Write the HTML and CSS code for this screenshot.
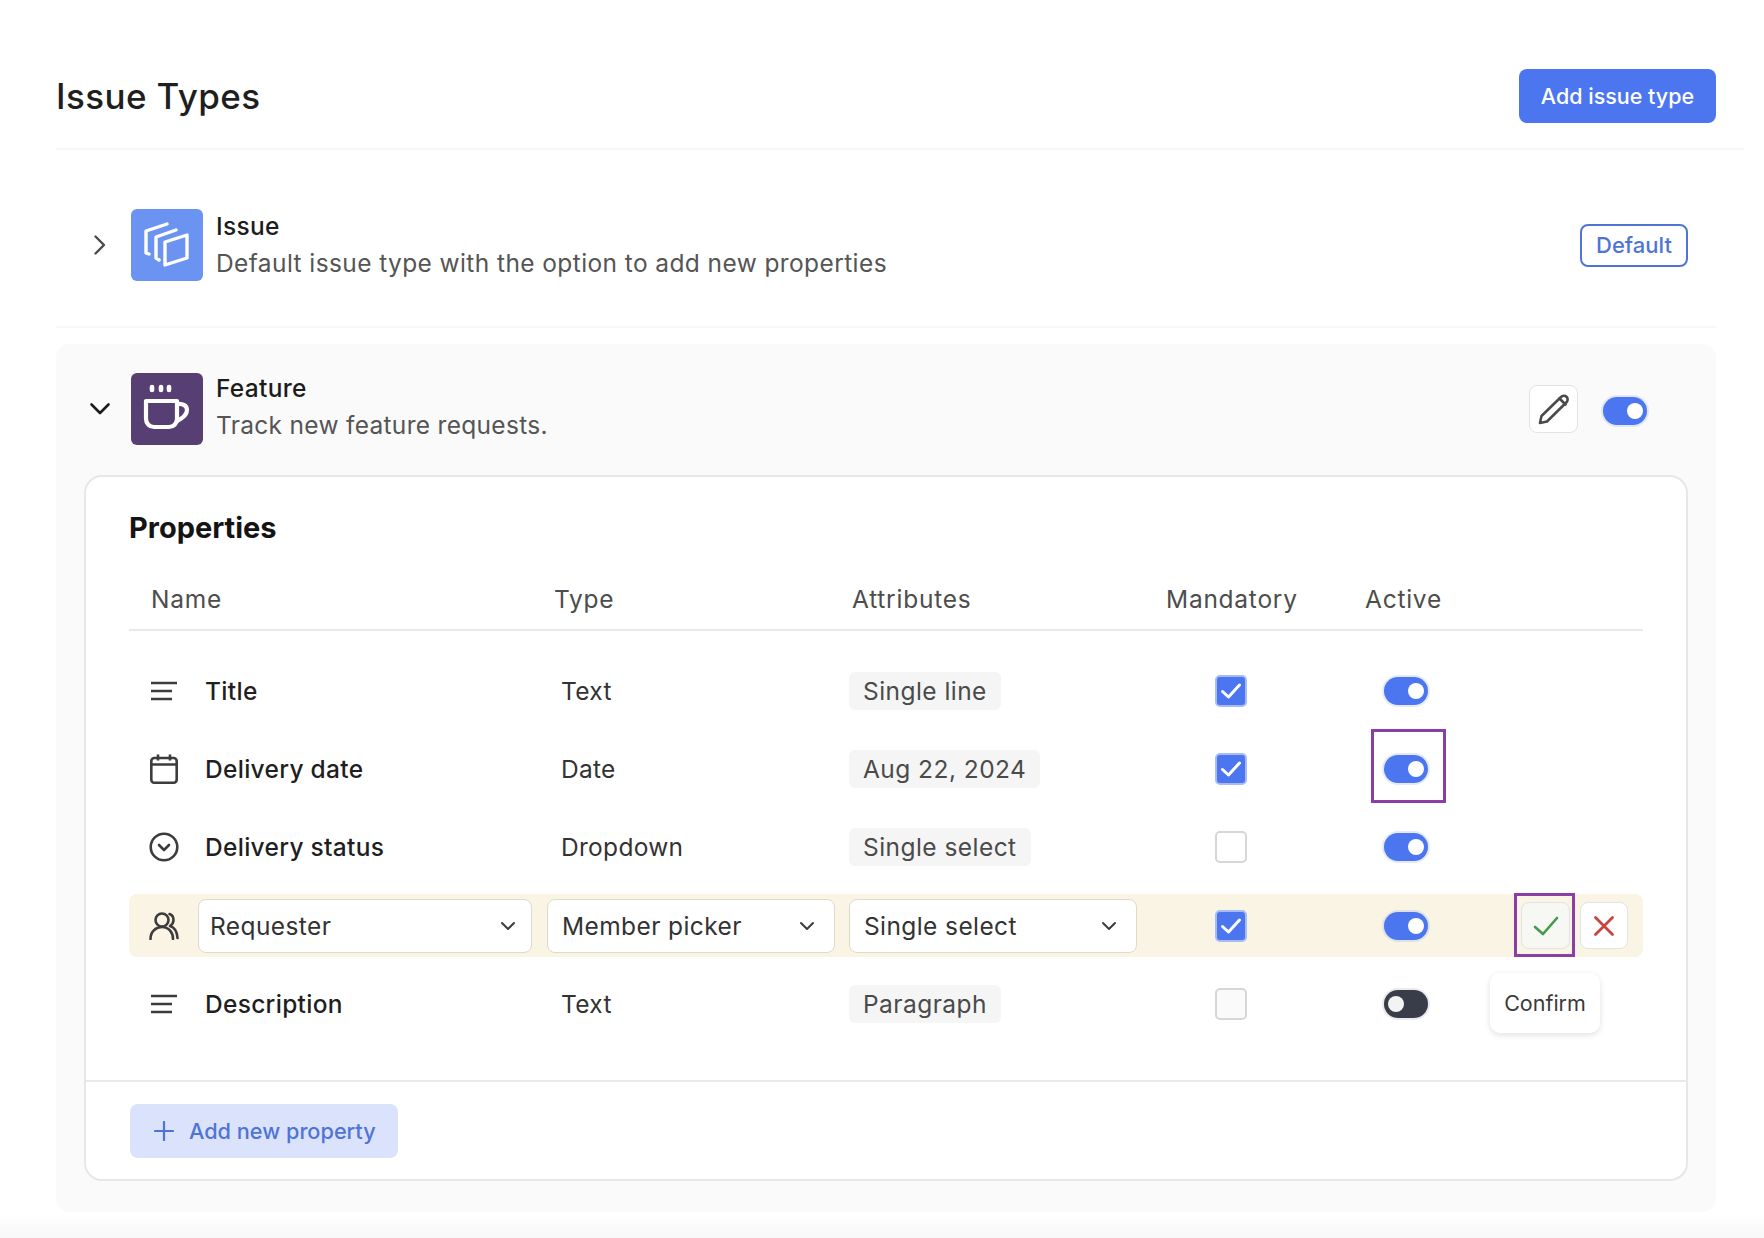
FILE: index.html
```html
<!DOCTYPE html>
<html lang="en">
<head>
<meta charset="utf-8">
<title>Issue Types</title>
<link rel="stylesheet" href="styles.css">
</head>
<body>
<main class="page">
  <header class="page-head">
    <h1 class="page-title">Issue Types</h1>
    <button class="btn-primary">Add issue type</button>
  </header>

  <section class="type-row">
    <span class="chev-cell"><svg width="14" height="22" viewBox="0 0 14 22"><path d="M2.500 2.500 11 11l-8.500 8.500" fill="none" stroke="#4a4a4a" stroke-width="2.400" stroke-linecap="round" stroke-linejoin="round"/></svg></span>
    <span class="type-icon type-icon-blue">
      <svg width="72" height="72" viewBox="0 0 72 72" fill="none" stroke="#fff" stroke-width="3.400" stroke-linejoin="round" stroke-linecap="round">
        <path d="M36 15 15 22v22l3 1"/>
        <path d="M45 21 25 28v21l3 2"/>
        <path d="M34 33 56 26v23l-22 7z"/>
      </svg>
    </span>
    <div class="type-text">
      <div class="type-name">Issue</div>
      <div class="type-desc">Default issue type with the option to add new properties</div>
    </div>
    <span class="badge-default">Default</span>
  </section>

  <section class="panel">
    <div class="panel-head">
      <span class="chev-cell"><svg width="22" height="14" viewBox="0 0 22 14"><path d="M2.500 2.500 11 11l8.500-8.500" fill="none" stroke="#1c1c1c" stroke-width="2.600" stroke-linecap="round" stroke-linejoin="round"/></svg></span>
      <span class="type-icon type-icon-purple">
        <svg width="72" height="72" viewBox="0 0 72 72" fill="none" stroke="#fff" stroke-linecap="round" stroke-linejoin="round">
          <path d="M21 14v3M30 14v3M38 14v3" stroke-width="4.600"/>
          <path d="M15 28h31v18a8 8 0 0 1-8 8H23a8 8 0 0 1-8-8z" stroke-width="4.200"/>
          <path d="M46 31c6-1 10 2 10 6 0 5-4 8-10 11" stroke-width="4.200"/>
        </svg>
      </span>
      <div class="type-text">
        <div class="type-name">Feature</div>
        <div class="type-desc type-desc-short">Track new feature requests.</div>
      </div>
      <button class="icon-btn icon-btn-edit" aria-label="Edit">
        <svg width="34" height="34" viewBox="0 0 34 34" fill="none" stroke="#4a4a4a" stroke-width="2.600" stroke-linejoin="round" stroke-linecap="round">
          <path d="M3 31l1.500-7L24 5c1.600-1.600 4-1.600 5.500-.2s1.500 3.900 0 5.500L10 29.500z"/>
          <path d="M22.500 6.500l6 6"/>
        </svg>
      </button>
      <span class="toggle toggle-on toggle-head"></span>
    </div>

    <div class="card">
      <div class="card-body">
        <h2 class="card-title">Properties</h2>
        <div class="table-head">
          <span class="th th-name">Name</span>
          <span class="th th-type">Type</span>
          <span class="th th-attr">Attributes</span>
          <span class="th th-mand">Mandatory</span>
          <span class="th th-active">Active</span>
        </div>
        <div class="rows">
          <div class="row">
            <span class="cell-icon"><svg width="28" height="20" viewBox="0 0 28 20"><path d="M1 2h26M1 10h21M1 18h21" fill="none" stroke="#3c3c3c" stroke-width="2.600"/></svg></span>
            <span class="cell-name">Title</span>
            <span class="cell-type">Text</span>
            <span class="cell-attr"><span class="tag">Single line</span></span>
            <span class="check check-on"><svg width="22" height="18" viewBox="0 0 22 18"><path d="M2.500 9.500 8.500 15 19.500 3" fill="none" stroke="#fff" stroke-width="3" stroke-linecap="round" stroke-linejoin="round"/></svg></span>
            <span class="toggle toggle-on"></span>
          </div>

          <div class="row">
            <span class="cell-icon"><svg width="28" height="30" viewBox="0 0 28 30" fill="none" stroke="#3c3c3c" stroke-width="2.600"><rect x="1.300" y="4" width="25.400" height="24.700" rx="3"/><path d="M1 10.500h26M8 .5v6M20 .5v6"/></svg></span>
            <span class="cell-name">Delivery date</span>
            <span class="cell-type">Date</span>
            <span class="cell-attr"><span class="tag">Aug 22, 2024</span></span>
            <span class="check check-on"><svg width="22" height="18" viewBox="0 0 22 18"><path d="M2.500 9.500 8.500 15 19.500 3" fill="none" stroke="#fff" stroke-width="3" stroke-linecap="round" stroke-linejoin="round"/></svg></span>
            <span class="toggle toggle-on"></span>
            <span class="focus-box focus-box-toggle"></span>
          </div>

          <div class="row">
            <span class="cell-icon"><svg width="30" height="30" viewBox="0 0 30 30" fill="none" stroke="#3c3c3c" stroke-width="2.600" stroke-linecap="round" stroke-linejoin="round"><circle cx="15" cy="15" r="13.300"/><path d="M10 13l5 5 5-5"/></svg></span>
            <span class="cell-name">Delivery status</span>
            <span class="cell-type">Dropdown</span>
            <span class="cell-attr"><span class="tag">Single select</span></span>
            <span class="check"></span>
            <span class="toggle toggle-on"></span>
          </div>

          <div class="row row-edit">
            <span class="row-band">
              <span class="cell-icon"><svg width="30" height="28" viewBox="0 0 30 28" fill="none" stroke="#3c3c3c" stroke-width="2.600" stroke-linecap="round" stroke-linejoin="round"><circle cx="13" cy="8" r="6.500"/><path d="M1.500 27c0-7 5-12 11.500-12s11 5 11 12"/><path d="M20.500 2c3 1 4 3.500 4 6s-1 4.500-3.500 6c3.500 1 7 5 7.500 12"/></svg></span>
              <span class="select select-name">Requester<svg width="16" height="10" viewBox="0 0 16 10"><path d="M2 2l6 6 6-6" fill="none" stroke="#3c3c3c" stroke-width="2" stroke-linecap="round" stroke-linejoin="round"/></svg></span>
              <span class="select select-type">Member picker<svg width="16" height="10" viewBox="0 0 16 10"><path d="M2 2l6 6 6-6" fill="none" stroke="#3c3c3c" stroke-width="2" stroke-linecap="round" stroke-linejoin="round"/></svg></span>
              <span class="select select-attr">Single select<svg width="16" height="10" viewBox="0 0 16 10"><path d="M2 2l6 6 6-6" fill="none" stroke="#3c3c3c" stroke-width="2" stroke-linecap="round" stroke-linejoin="round"/></svg></span>
              <span class="check check-on check-edit"><svg width="22" height="18" viewBox="0 0 22 18"><path d="M2.500 9.500 8.500 15 19.500 3" fill="none" stroke="#fff" stroke-width="3" stroke-linecap="round" stroke-linejoin="round"/></svg></span>
              <span class="toggle toggle-on toggle-edit"></span>
              <button class="icon-btn icon-btn-confirm" aria-label="Confirm"><svg width="26" height="20" viewBox="0 0 26 20"><path d="M2 11l8 7L24 2" fill="none" stroke="#429a4b" stroke-width="2.600" stroke-linecap="round" stroke-linejoin="round"/></svg></button>
              <button class="icon-btn icon-btn-cancel" aria-label="Cancel"><svg width="20" height="20" viewBox="0 0 20 20"><path d="M1.500 1.500l17 17M18.500 1.500l-17 17" fill="none" stroke="#c9443f" stroke-width="2.800" stroke-linecap="round"/></svg></button>
              <span class="focus-box focus-box-confirm"></span>
            </span>
          </div>

          <div class="row">
            <span class="cell-icon"><svg width="28" height="20" viewBox="0 0 28 20"><path d="M1 2h26M1 10h21M1 18h21" fill="none" stroke="#3c3c3c" stroke-width="2.600"/></svg></span>
            <span class="cell-name">Description</span>
            <span class="cell-type">Text</span>
            <span class="cell-attr"><span class="tag">Paragraph</span></span>
            <span class="check check-muted"></span>
            <span class="toggle toggle-off"></span>
            <span class="tooltip">Confirm</span>
          </div>
        </div>
      </div>
      <div class="card-foot">
        <button class="btn-soft"><svg width="20" height="20" viewBox="0 0 20 20"><path d="M10 1v18M1 10h18" fill="none" stroke="#4f74d6" stroke-width="2.200" stroke-linecap="round"/></svg>Add new property</button>
      </div>
    </div>
  </section>
</main>
</body>
</html>
```

FILE: styles.css
```css
* { box-sizing: border-box; }
html, body { margin: 0; height: 100%; }
body {
  font-family: Inter, "Liberation Sans", sans-serif;
  color: #1c1c1c;
  background: linear-gradient(to bottom, #fff 0, #fff 1214px, #f7f7f7 1238px);
  overflow: hidden;
}
button { font-family: inherit; cursor: pointer; }
.page { padding: 0 48px 0 56px; }

.page-head {
  display: flex;
  justify-content: space-between;
  align-items: center;
  margin-right: -28px;
  padding: 69px 28px 25px 0;
  border-bottom: 2px solid #f6f6f6;
}
.page-title { margin: 0; font-size: 35px; line-height: 54px; font-weight: 500; letter-spacing: 0.4px; color: #1f1f1f; }
.btn-primary {
  width: 197px; height: 54px;
  background: #4c76f0; color: #fff;
  border: 0; border-radius: 8px;
  font-size: 21.500px; font-weight: 500;
}

.type-row {
  display: flex;
  align-items: center;
  padding: 58px 28px 44px 0;
  border-bottom: 2px solid #f8f8f8;
}
.chev-cell { width: 75px; display: flex; justify-content: center; padding-left: 13px; }
.type-icon {
  width: 72px; height: 72px;
  border-radius: 6px;
  display: flex; align-items: center; justify-content: center;
  flex: none;
}
.type-icon-blue { background: #6b93f2; }
.type-icon-purple { background: #573f73; }
.type-text { flex: 1; margin-left: 13px; }
.type-name { font-size: 24.500px; line-height: 36px; font-weight: 500; letter-spacing: 0.3px; color: #1c1c1c; }
.type-desc { font-size: 24.500px; line-height: 38px; color: #555; letter-spacing: 0.4px; }
.type-desc-short { letter-spacing: 0.3px; line-height: 39px; }
.badge-default {
  width: 108px; height: 43px;
  display: flex; align-items: center; justify-content: center;
  border: 2px solid #4f74d6; border-radius: 8px;
  color: #4f74d6; font-size: 22px; font-weight: 500;
  background: #fff;
}

.panel {
  margin-top: 16px;
  padding: 28px 28px 31px;
  background: #fafafa;
  border-radius: 14px;
}
.panel-head { display: flex; align-items: center; margin-left: -28px; padding-right: 41px; }
.panel-head .type-text { margin-top: -2px; }
.icon-btn {
  display: flex; align-items: center; justify-content: center;
  background: #fff;
  border: 1px solid #e3e3e3;
  border-radius: 8px;
  padding: 0;
}
.icon-btn-edit { width: 49px; height: 48px; margin-right: 25px; }
.toggle {
  display: block;
  position: relative;
  width: 44px; height: 28px;
  border-radius: 14px;
  box-shadow: 0 0 0 2px rgba(120, 150, 240, .2);
}
.toggle::after {
  content: "";
  position: absolute;
  top: 6px;
  width: 16px; height: 16px;
  border-radius: 50%;
  background: #fff;
}
.toggle-on { background: #4c76f0; }
.toggle-on::after { right: 4px; }
.toggle-off { background: #393d4a; box-shadow: 0 0 0 2px rgba(60, 60, 70, .1); }
.toggle-off::after { left: 4px; background: #f3f3f3; }
.toggle-head { margin-top: 4px; }

.card {
  margin-top: 30px;
  background: #fff;
  border: 2px solid #e7e7e7;
  border-radius: 18px;
}
.card-body { padding: 0 43px 0; }
.card-title { margin: 0; padding-top: 32px; font-size: 29px; line-height: 38px; font-weight: 700; color: #141414; }
.table-head {
  display: flex;
  align-items: center;
  height: 94px;
  margin-top: -10px;
  padding: 38px 0 7px 22px;
  border-bottom: 2px solid #e9e9e9;
}
.th { font-size: 24.500px; color: #4d4d4d; letter-spacing: 0.75px; }
.th-name { width: 403px; }
.th-type { width: 298px; }
.th-attr { width: 314px; }
.th-mand { width: 199px; }

.rows { padding: 21px 0 37px; }
.row {
  position: relative;
  display: grid;
  grid-template-columns: 69px 363px 288px 366px 169px 1fr;
  align-items: center;
  height: 78px;
}
.row-edit { display: block; height: 79px; padding: 8px 0; }
.row-band {
  position: relative;
  display: flex;
  align-items: center;
  height: 63px;
  background: #faf4e4;
  border-radius: 8px;
}
.cell-icon { display: flex; align-items: center; justify-content: center; width: 69px; flex: none; }
.cell-name { font-size: 24.500px; font-weight: 500; letter-spacing: 0.3px; padding-left: 7px; color: #1f1f1f; }
.cell-type { font-size: 24.500px; letter-spacing: 0.3px; color: #333; }
.cell-attr { display: block; }
.tag {
  display: inline-block;
  padding: 0 14px;
  height: 38px; line-height: 38px;
  background: #f5f5f5;
  border-radius: 6px;
  font-size: 24.500px;
  letter-spacing: 0.45px;
  color: #4a4a4a;
}
.check {
  display: flex; align-items: center; justify-content: center;
  width: 32px; height: 32px;
  border: 2px solid #d6d6d6;
  border-radius: 5px;
  background: #fff;
}
.check-muted { background: #fafafa; }
.check-on { background: #4c76f0; border-color: #a7bcf6; }

.select {
  display: flex; align-items: center; justify-content: space-between;
  height: 54px;
  padding: 0 15px 0 11px;
  background: #fff;
  border: 1px solid #dedad0;
  border-radius: 8px;
  font-size: 24.500px;
  letter-spacing: 0.4px;
  color: #333;
  flex: none;
}
.select-name { width: 334px; margin-right: 15px; }
.select-type { width: 288px; margin-right: 14px; padding-left: 14px; padding-right: 19px; }
.select-attr { width: 288px; margin-right: 78px; padding-left: 14px; padding-right: 19px; }
.check-edit { flex: none; margin-right: 137px; }
.toggle-edit { flex: none; margin-right: 93px; }
.icon-btn-confirm { width: 49px; height: 47px; background: #f7f7f4; margin-right: 10px; flex: none; }
.icon-btn-cancel { width: 48px; height: 47px; flex: none; }

.focus-box {
  position: absolute;
  border: 3px solid #8a3fa6;
  pointer-events: none;
}
.focus-box-toggle { left: 1242px; top: -1px; width: 75px; height: 74px; }
.focus-box-confirm { left: 1385px; top: -1px; width: 61px; height: 64px; }

.tooltip {
  position: absolute;
  left: 1361px; top: 8px;
  width: 110px; height: 60px;
  display: flex; align-items: center; justify-content: center;
  background: #fff;
  border-radius: 10px;
  box-shadow: 0 2px 6px rgba(0, 0, 0, .12);
  font-size: 21.500px;
  color: #3a3a3a;
}

.card-foot { border-top: 2px solid #e9e9e9; padding: 22px 43px 21px 44px; }
.btn-soft {
  display: flex; align-items: center; gap: 15px;
  width: 268px; height: 54px;
  padding: 0 0 0 24px;
  background: #dbe2fb;
  color: #4f74d6;
  border: 0; border-radius: 8px;
  font-size: 21.700px; font-weight: 500;
}
```
